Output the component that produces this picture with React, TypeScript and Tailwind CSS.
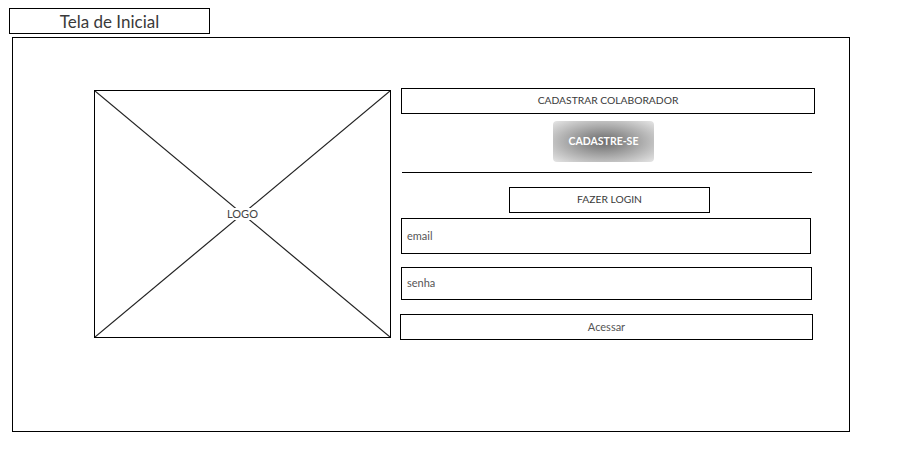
export default function App() {
  return (
    <div className="w-[905px] h-[452px] bg-white pt-2 pl-[9px] text-[#3a3a3a] font-['Lato',sans-serif]">
      {/* Page title */}
      <div className="w-[201px] h-[26px] border border-black flex items-center justify-center text-[17px] leading-none">
        Tela de Inicial
      </div>

      {/* Frame */}
      <div className="mt-[3px] ml-[3px] w-[838px] h-[395px] border border-black flex pt-[50px] pl-[81px]">
        {/* Logo placeholder */}
        <div className="relative w-[297px] h-[248px] mt-[2px] border border-black">
          <svg className="absolute inset-0 w-full h-full" viewBox="0 0 295 246" preserveAspectRatio="none">
            <line x1="0" y1="0" x2="295" y2="246" stroke="#222" strokeWidth="1.2" />
            <line x1="295" y1="0" x2="0" y2="246" stroke="#222" strokeWidth="1.2" />
          </svg>
          <div className="absolute inset-0 flex items-center justify-center">
            <span className="bg-white px-px text-[11px] leading-[12px] text-[#444]">LOGO</span>
          </div>
        </div>

        {/* Right column */}
        <div className="ml-[10px] w-[414px] flex flex-col text-[11px]">
          <div className="w-[414px] h-[26px] border border-black flex items-center justify-center text-[10.3px]">
            CADASTRAR COLABORADOR
          </div>
          <button className="mt-[7px] self-start ml-[152px] w-[101px] h-[41px] rounded-sm bg-radial from-[#6c6c6c] via-[#a8a8a8] to-[#e6e6e6] text-white font-bold text-[10.5px]">
            CADASTRE-SE
          </button>
          <div className="mt-[10px] ml-px w-[410px] h-px bg-black" />
          <div className="mt-[14px] ml-[108px] w-[201px] h-[26px] border border-black flex items-center justify-center text-[10.3px]">
            FAZER LOGIN
          </div>
          <div className="mt-[5px] w-[410px] h-[36px] border border-black flex items-center px-[5px] text-[#555]">
            email
          </div>
          <div className="mt-[13px] w-[411px] h-[33px] border border-black flex items-center px-[5px] text-[#555]">
            senha
          </div>
          <div className="mt-[14px] -ml-px w-[413px] h-[26px] border border-black flex items-center justify-center text-[#555]">
            Acessar
          </div>
        </div>
      </div>
    </div>
  );
}
